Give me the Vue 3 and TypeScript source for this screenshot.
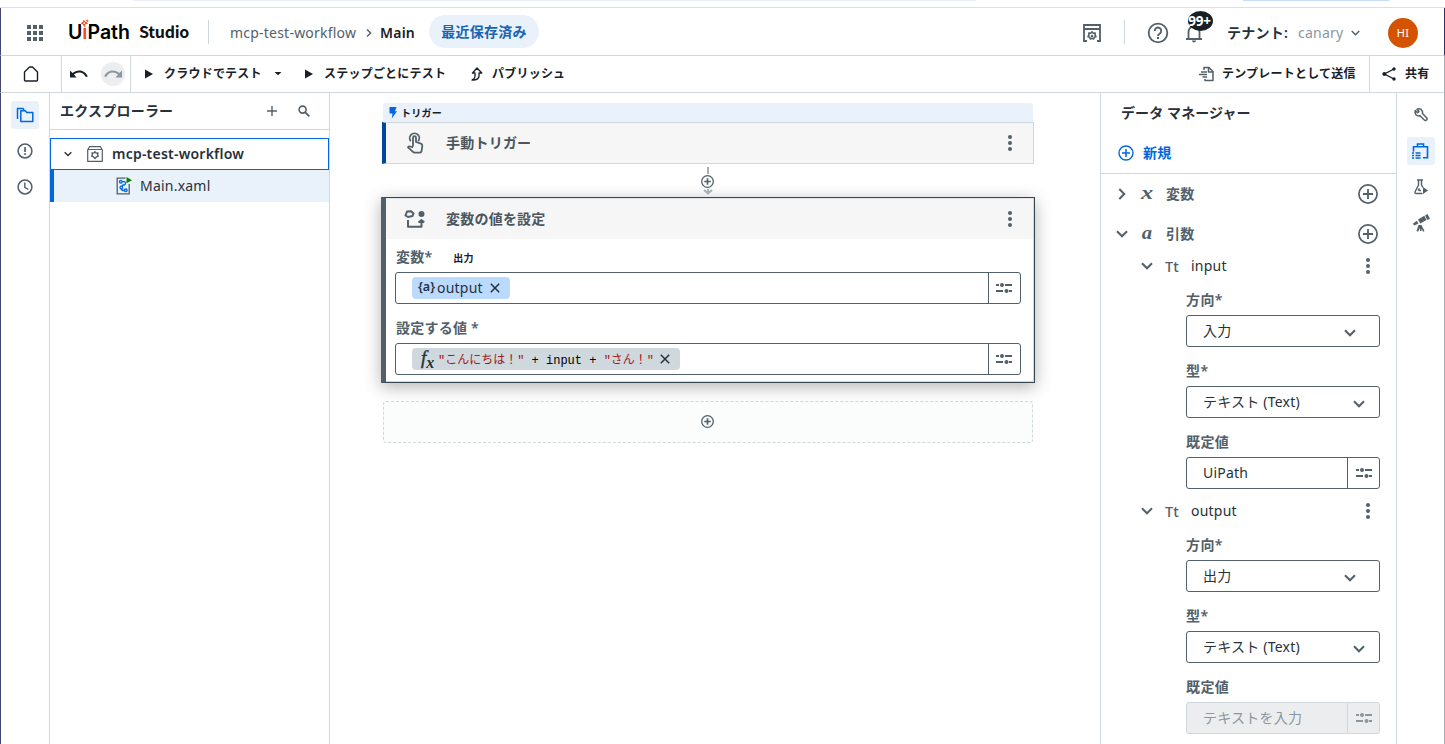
<script setup lang="ts">
import { h, type FunctionalComponent } from 'vue'

interface Glyph { w: number; h: number; body: string }

const line = 'fill="none" stroke="currentColor"'
const glyphs: Record<string, Glyph> = {
  apps: { w: 16, h: 16, body: '<path fill="currentColor" d="M0 0h4v4H0zM6 0h4v4H6zM12 0h4v4h-4zM0 6h4v4H0zM6 6h4v4H6zM12 6h4v4h-4zM0 12h4v4H0zM6 12h4v4H6zM12 12h4v4h-4z"/>' },
  spark: { w: 8, h: 7, body: '<path fill="none" stroke="#fa4616" stroke-width="1.100" d="M3 1.8 4.2 3.3 6 4.2 4.2 5 3 6.5 2.2 5 .6 4.2 2.2 3.3z"/><path fill="#fa4616" d="M6.2 0l.5 1.2L8 1.7l-1.3.5-.5 1.2-.5-1.2-1.2-.5 1.2-.5z"/>' },
  right: { w: 6, h: 10, body: `<path ${line} stroke-width="1.4" d="M1 1.5 4.6 5 1 8.5"/>` },
  store: { w: 18, h: 18, body: `<path ${line} stroke-width="1.8" d="M1 1h16v4H1zM4 17H1V5M14 17h3V5"/><path ${line} stroke-width="1.6" stroke-linejoin="round" d="m9 7.8 1.300 1.400 1.900-.1-.2 1.900 1 1.500-1.700.8-.7 1.700-1.600-.700-1.600.7-.7-1.700-1.700-.8 1-1.500-.2-1.900 1.900.1z"/><circle cx="9" cy="12" r="1.200" fill="currentColor"/>` },
  help: { w: 22, h: 22, body: `<circle cx="11" cy="11" r="9.3" ${line} stroke-width="1.8"/><path ${line} stroke-width="1.8" d="M7.800 9A3.200 3.200 0 1 1 12.800 11.400Q11 12.500 11 14"/><path fill="currentColor" d="M10 15h2v2h-2z"/>` },
  bell: { w: 18, h: 20, body: `<path ${line} stroke-width="1.8" d="M1 16h16M3.500 16V9.500C3.500 5.500 5.500 3.500 9 3.500s5.500 2 5.500 6V16"/><path fill="currentColor" d="M7 17.500h4a2 2 0 0 1-4 0z"/>` },
  down: { w: 12, h: 8, body: `<path ${line} stroke-width="2" d="M1 1.300 6 6.300l5-5"/>` },
  home: { w: 16, h: 16, body: `<path ${line} stroke-width="1.4" stroke-linejoin="round" d="M1.500 6 6.500 1h3l5 5V14q0 1-1 1h-11q-1 0-1-1z"/>` },
  undo: { w: 18, h: 9, body: '<path fill="currentColor" d="M0 .5 2.500 3C4.500 1.300 6.700.4 9.200.4c4 0 7.200 2.500 8.600 6l-2 .7C14.700 4.300 12.200 2.500 9.200 2.500c-2 0-3.800.8-5.200 2L6.500 7.500H0z"/>' },
  play: { w: 8, h: 10, body: '<path fill="currentColor" d="M0 .5 8 5 0 9.500z"/>' },
  caret: { w: 8, h: 4, body: '<path fill="currentColor" d="M.5 0h7L4 3.200z"/>' },
  publish: { w: 12, h: 14, body: `<path ${line} stroke-width="1.300" stroke-linejoin="round" d="M6 1 1.500 6H4v3.500Q3.700 12 1 13q6 .5 7-3.500V6h2.800z"/>` },
  folders: { w: 18, h: 16, body: `<path ${line} stroke-width="1.500" stroke-linejoin="round" d="M4.800 3.800h4.500l1.500 1.700h6V14.500h-12zM1.500 12V1.500H7l1.200 1.300"/>` },
  alert: { w: 16, h: 16, body: `<circle cx="8" cy="8" r="6.900" ${line} stroke-width="1.500"/><path fill="currentColor" d="M7.200 4h1.700v5H7.200zM7.200 10.300h1.700V12H7.200z"/>` },
  clock: { w: 16, h: 16, body: `<circle cx="8" cy="8" r="6.900" ${line} stroke-width="1.500"/><path ${line} stroke-width="1.400" d="M7.800 3.500V8.300l3.500 2.200"/>` },
  plus: { w: 10, h: 10, body: `<path ${line} stroke-width="1.400" d="M5 0v10M0 5h10"/>` },
  search: { w: 12, h: 12, body: `<circle cx="4.600" cy="4.600" r="3.500" ${line} stroke-width="1.600"/><path ${line} stroke-width="1.900" d="m7.300 7.300 4 4"/>` },
  project: { w: 16, h: 16, body: `<path ${line} stroke-width="1.200" stroke-linejoin="round" d="M1 3.500 2.500.7h11L15 3.500M.7 3.500h14.600v11.800H.7z"/><path ${line} stroke-width="1.400" stroke-linejoin="round" d="m8 5.800 1.200 1.300 1.800-.2-.5 2 .8 1.300-1.900.7L8 12.400l-1.400-1.500-1.900-.7.8-1.300-.5-2 1.800.2z"/>` },
  xaml: { w: 16, h: 18, body: `<path fill="none" stroke="#526069" stroke-width="1.300" d="M9.500 1.200H1.200v15.600h12V7"/><g fill="none" stroke="#0067df" stroke-width="1.300"><circle cx="4.800" cy="4.700" r="1.300"/><circle cx="5.300" cy="10.500" r="1.300"/><circle cx="9.800" cy="13.300" r="1.300"/><path d="M6 4.700h2.300q1.200 0 1.200 1.500T8.300 8H7L5.800 9.500M5.300 12q.3 1.500 3.200 1.500"/></g><path fill="#038108" d="M10.500 0 16 3.200l-5.500 3z"/>` },
  bolt: { w: 8, h: 12, body: '<path fill="#0067df" d="M.5 0h7L6 4.300h2L2.800 11.500 3.500 6.500H.5z"/>' },
  touch: { w: 18, h: 22, body: `<path ${line} stroke-width="1.800" stroke-linejoin="round" d="M7 14.500V5.700a1.500 1.500 0 0 1 3 0V10l5 1.700q1.500.5 1.300 2.300l-.7 5q-.3 1.700-2 1.700H8.700q-1 0-1.700-.8L2 15.300q.8-1.300 2.300-.8L7 15.500"/><path ${line} stroke-width="1.800" d="M4.800 9.200a4.800 4.800 0 1 1 7.400 0"/>` },
  assign: { w: 22, h: 18, body: `<path ${line} stroke-width="2" stroke-linejoin="round" d="M3 1.500 7 1.300 9.500 3.500 8.500 6 4 7 1.500 5.500zM4 10v6.700h13.500V11M14.500 12.500l3-2.500 2.700 2.500"/><circle cx="17.500" cy="4" r="3" fill="currentColor"/>` },
  kebab: { w: 4, h: 16, body: '<g fill="currentColor"><circle cx="2" cy="2" r="2"/><circle cx="2" cy="8" r="2"/><circle cx="2" cy="14" r="2"/></g>' },
  sliders: { w: 16, h: 10, body: `<path ${line} stroke-width="2" d="M0 2h3M9 2h7M0 8h7M13 8h3"/><g fill="currentColor"><circle cx="6" cy="2" r="2"/><circle cx="10.500" cy="8" r="2"/></g>` },
  cross: { w: 10, h: 10, body: `<path ${line} stroke-width="1.500" d="m.8.8 8.400 8.400M9.200.8.8 9.200"/>` },
  add: { w: 13, h: 13, body: `<circle cx="6.500" cy="6.500" r="5.800" ${line} stroke-width="1.300"/><path ${line} stroke-width="1.700" d="M6.500 3.200v6.600M3.200 6.500h6.600"/>` },
  addBlue: { w: 16, h: 16, body: `<circle cx="8" cy="8" r="7" ${line} stroke-width="1.400"/><path ${line} stroke-width="1.500" d="M8 4v8M4 8h8"/>` },
  addBig: { w: 20, h: 20, body: `<circle cx="10" cy="10" r="9.100" ${line} stroke-width="1.700"/><path ${line} stroke-width="1.800" d="M10 5v10M5 10h10"/>` },
  stem: { w: 2, h: 8, body: '<path fill="#a4b1b8" d="M0 0h2v7H0z"/>' },
  arrow: { w: 10, h: 6, body: '<path fill="none" stroke="#a4b1b8" stroke-width="2" d="m1 1 4 3.500L9 1M5 0v4"/>' },
  template: { w: 15, h: 16, body: `<path ${line} stroke-width="1.500" stroke-linejoin="round" d="M5 4V1.500h5l4 4v9H6V13M9.500 1.500V6H14M2 6h6M0 8.500h8M3.500 11H8"/>` },
  share: { w: 14, h: 14, body: `<path ${line} stroke-width="1.400" d="M12 2 2.500 7l9.500 5"/><g fill="currentColor"><circle cx="12" cy="2" r="1.700"/><circle cx="2.300" cy="7" r="2"/><circle cx="12" cy="12" r="1.700"/></g>` },
  wrench: { w: 14, h: 14, body: `<path ${line} stroke-width="1.500" stroke-linejoin="round" d="M1.300 2.600 3.600 4.800 5 3.500 3 1.200q4-1.200 5.300 1.800.5 1.300 0 2.300l4.500 4.700q.8 1-.2 2t-2 .2L6 7.800Q3.500 8.500 2 6.800.7 5 1.300 2.600z"/>` },
  dataCase: { w: 17, h: 16, body: `<path ${line} stroke-width="1.600" d="M1.500 8.500V3.800h14v11H11M5.500 3.500V1h6v2.500"/><path ${line} stroke-width="1.500" d="M0 10h2M3.500 10h5M0 12.500h2M3.500 12.500h5M0 15h2M3.500 15h5"/>` },
  flask: { w: 14, h: 16, body: `<path ${line} stroke-width="1.400" stroke-linejoin="round" d="M3 1h6M4.500 1v5L1 13q-.3 1.500 1 1.500h6.500M7.500 1v5l1.500 2.500M4 11.500 5.500 9.500"/><path fill="currentColor" d="m9 8 5 3.500L9 15z"/><circle cx="6" cy="11.500" r="1" fill="currentColor"/>` },
  scope: { w: 18, h: 18, body: '<g fill="currentColor"><path d="M13 1.500 15.500 0 18 4.700 15.300 6zM6 5.500l6.300-3.700 2.200 4.300L8.300 9.500zM1 9.500l4-2.800L6.300 9.800 2 11.500zM6.500 11h3l3 6-1.400.8L9.500 14.500V17H8v-3l-2 3.800L4.500 17z"/></g>' },
}

const Icon: FunctionalComponent<{ name: string }> = (props) => {
  const g = glyphs[props.name]
  return h('svg', { width: g.w, height: g.h, viewBox: `0 0 ${g.w} ${g.h}`, innerHTML: g.body, 'aria-hidden': 'true' })
}
Icon.props = ['name']

interface Argument { name: string; direction: string; value: string; disabled: boolean }
const args: Argument[] = [
  { name: 'input', direction: '入力', value: 'UiPath', disabled: false },
  { name: 'output', direction: '出力', value: 'テキストを入力', disabled: true },
]
</script>

<template>
  <div class="frame">
    <div class="strip"><span class="strip-a"></span><span class="strip-b"></span></div>

    <header class="header">
      <Icon name="apps" class="apps" />
      <div class="brand"><span>U<b>i</b>Path</span><Icon name="spark" class="spark" /></div>
      <span class="studio">Studio</span>
      <i class="vline head-line"></i>
      <span class="crumb">mcp-test-workflow</span>
      <Icon name="right" class="crumb-sep" />
      <span class="crumb-main">Main</span>
      <span class="pill">最近保存済み</span>
      <div class="head-right">
        <Icon name="store" />
        <i class="vline line-r"></i>
        <Icon name="help" class="help" />
        <div class="bell"><Icon name="bell" /><span class="badge">99+</span></div>
        <span class="tenant">テナント:</span>
        <span class="canary">canary</span>
        <Icon name="down" class="tenant-down" />
        <span class="avatar">HI</span>
      </div>
    </header>

    <div class="toolbar">
      <div class="tb-home"><Icon name="home" /></div>
      <div class="tb-undo"><Icon name="undo" /><span class="redo"><Icon name="undo" class="flip" /></span></div>
      <Icon name="play" class="play1" /><span class="t1">クラウドでテスト</span><Icon name="caret" class="caret" />
      <Icon name="play" class="play2" /><span class="t2">ステップごとにテスト</span>
      <Icon name="publish" class="pub" /><span class="t3">パブリッシュ</span>
      <div class="tb-right">
        <Icon name="template" class="tpl" /><span class="t4">テンプレートとして送信</span>
        <div class="share"><Icon name="share" /><span>共有</span></div>
      </div>
    </div>

    <div class="body">
      <nav class="rail left">
        <span class="rail-item on"><Icon name="folders" /></span>
        <span class="rail-item"><Icon name="alert" /></span>
        <span class="rail-item"><Icon name="clock" /></span>
      </nav>

      <aside class="explorer">
        <div class="ex-head"><span>エクスプローラー</span><Icon name="plus" class="ex-plus" /><Icon name="search" class="ex-search" /></div>
        <div class="row project"><Icon name="down" class="tree-down" /><Icon name="project" class="prj" /><span>mcp-test-workflow</span></div>
        <div class="row file"><Icon name="xaml" /><span>Main.xaml</span></div>
      </aside>

      <main class="canvas">
        <div class="trigger-tab"><Icon name="bolt" /><span>トリガー</span></div>
        <section class="trigger"><Icon name="touch" class="act-icon" /><span class="act-title">手動トリガー</span><Icon name="kebab" class="act-menu" /></section>
        <div class="link"><Icon name="stem" /><Icon name="add" class="add" /><Icon name="arrow" class="arrow" /></div>
        <section class="activity">
          <div class="act-head"><Icon name="assign" class="act-icon" /><span class="act-title">変数の値を設定</span><Icon name="kebab" class="act-menu" /></div>
          <div class="label first"><span>変数*</span><small>出力</small></div>
          <div class="field"><div class="slot"><span class="chip var"><b class="brace">{a}</b><span class="var-name">output</span><Icon name="cross" /></span></div><div class="opts"><Icon name="sliders" /></div></div>
          <div class="label second"><span>設定する値 *</span></div>
          <div class="field"><div class="slot"><span class="chip expr"><i class="fx">f<sub>x</sub></i><code><em>"こんにちは！"</em> + input + <em>"さん！"</em></code><Icon name="cross" /></span></div><div class="opts"><Icon name="sliders" /></div></div>
        </section>
        <div class="drop"><Icon name="add" class="add drop-add" /></div>
      </main>

      <aside class="data">
        <h2>データ マネージャー</h2>
        <div class="new"><Icon name="addBlue" /><span>新規</span></div>
        <div class="group"><span class="g-chev"><Icon name="down" class="turn" /></span><i class="g-sym">x</i><span class="g-name">変数</span><Icon name="addBig" class="g-add" /></div>
        <div class="group"><span class="g-chev"><Icon name="down" /></span><i class="g-sym sym-a">a</i><span class="g-name">引数</span><Icon name="addBig" class="g-add" /></div>
        <div v-for="a in args" :key="a.name" class="arg">
          <div class="arg-head"><Icon name="down" /><span class="tt">Tt</span><span class="arg-name">{{ a.name }}</span><Icon name="kebab" class="arg-menu" /></div>
          <div class="prop"><label>方向*</label><div class="select dir"><span>{{ a.direction }}</span><Icon name="down" /></div></div>
          <div class="prop"><label>型*</label><div class="select"><span>テキスト (Text)</span><Icon name="down" /></div></div>
          <div class="prop"><label>既定値</label><div class="value" :class="{ disabled: a.disabled }"><span>{{ a.value }}</span><div class="v-opts"><Icon name="sliders" /></div></div></div>
        </div>
      </aside>

      <nav class="rail right">
        <span class="rail-item"><Icon name="wrench" /></span>
        <span class="rail-item on"><Icon name="dataCase" /></span>
        <span class="rail-item"><Icon name="flask" /></span>
        <span class="rail-item"><Icon name="scope" /></span>
      </nav>
    </div>
  </div>
</template>

<style>
body { background: #fff; overflow: hidden; }
</style>

<style scoped>
.frame { box-sizing: border-box; width: 1445px; height: 744px; overflow: hidden; display: flex; flex-direction: column; background: #fff; color: #182027; font: 14px/20px "Noto Sans", "Noto Sans CJK JP", sans-serif; letter-spacing: .22px; }
.frame * { box-sizing: border-box; }
svg { display: block; flex: none; }
span, label, h2 { white-space: nowrap; }
.strip { height: 8px; flex: none; border-bottom: 1px solid #dcdfe3; display: flex; }
.strip-a { width: 843px; height: 1px; margin-left: 133px; background: #e9eef8; }
.strip-b { width: 146px; height: 1px; margin-left: 267px; background: #c9dbfb; }
.header { height: 48px; flex: none; display: flex; align-items: center; border-bottom: 1px solid #cfd8dd; border-left: 1px solid #444570; border-right: 1px solid #2d3468; padding-top: 2px; }
.apps { margin-left: 26px; color: #526069; }
.brand { position: relative; margin-left: 25px; width: 63px; font: 600 19.5px/24px Inter, sans-serif; letter-spacing: 0; color: #000; margin-top: -1px; }
.brand b { color: #fa4616; font-weight: 600; }
.spark { position: absolute; left: 13px; top: -1px; background: #fff; }
.studio { margin-left: 8px; width: 50px; font: 700 16px/24px "Noto Sans CJK JP", sans-serif; letter-spacing: -.25px; color: #111; margin-top: -3px; }
.vline { width: 1px; height: 24px; background: #cfd8dd; flex: none; margin-top: -2px; }
.head-line { margin-left: 19px; }
.crumb { margin-left: 21px; width: 126px; color: #526069; }
.crumb-sep { margin-left: 10px; color: #526069; }
.crumb-main { margin-left: 8px; width: 36px; font-weight: 600; color: #182027; }
.pill { margin-left: 13px; width: 110px; height: 33px; border-radius: 17px; background: #e9f1fa; color: #1665b3; text-align: center; line-height: 33px; font-weight: 700; margin-top: -2px; }
.head-right { margin-left: auto; display: flex; align-items: center; color: #526069; }
.line-r { margin-left: 23px; }
.help { margin-left: 22px; }
.bell { position: relative; margin-left: 16px; width: 18px; }
.badge { position: absolute; left: 3px; top: -12px; width: 25px; height: 20px; border-radius: 50%; background: #182027; color: #fff; font-size: 13.5px; line-height: 20px; font-weight: 700; text-align: center; letter-spacing: -.2px; text-indent: -2px; }
.tenant { margin-left: 24px; width: 62px; color: #273139; font-weight: 600; }
.canary { margin-left: 9px; width: 46px; color: #8a97a0; }
.tenant-down { margin-left: 7px; width: 9px; }
.avatar { margin: 0 26px 0 28px; width: 30px; height: 30px; border-radius: 50%; background: #d45300; color: #fff; font-size: 11px; line-height: 30px; text-align: center; }
.toolbar { height: 37px; flex: none; display: flex; align-items: center; border-bottom: 1px solid #cfd8dd; border-left: 1px solid #444570; border-right: 1px solid #a8acb2; font-size: 12px; font-weight: 700; }
.tb-home { width: 61px; height: 36px; border-right: 1px solid #cfd8dd; display: flex; align-items: center; padding-left: 22px; }
.tb-undo { width: 69px; height: 36px; border-right: 1px solid #cfd8dd; display: flex; align-items: center; padding-left: 8px; gap: 13px; }
.redo { width: 24px; height: 24px; border-radius: 50%; background: #ecedee; color: #8a97a0; display: flex; align-items: center; justify-content: center; }
.flip { transform: scaleX(-1); }
.play1 { margin-left: 14px; }
.t1 { margin-left: 11px; width: 99px; }
.caret { margin-left: 11px; }
.play2 { margin-left: 23px; }
.t2 { margin-left: 11px; width: 123px; }
.pub { margin-left: 24px; }
.t3 { margin-left: 9px; }
.tb-right { margin-left: auto; display: flex; align-items: center; height: 36px; }
.tpl { color: #526069; }
.t4 { margin-left: 8px; width: 135px; }
.share { height: 36px; width: 75px; margin-left: 12px; border-left: 1px solid #cfd8dd; padding-left: 12px; display: flex; align-items: center; gap: 9px; }
.body { flex: 1; min-height: 0; display: flex; border-left: 1px solid #444570; border-right: 1px solid #a8acb2; }
.rail { width: 49px; flex: none; display: flex; flex-direction: column; align-items: center; padding-top: 8px; gap: 8px; color: #526069; }
.left { border-right: 1px solid #cfd8dd; }
.right { width: 48px; border-left: 1px solid #cfd8dd; }
.rail-item { width: 28px; height: 28px; border-radius: 3px; display: flex; align-items: center; justify-content: center; }
.on { background: #e9f1fa; color: #0067df; }
.explorer { width: 280px; flex: none; border-right: 1px solid #cfd8dd; }
.ex-head { height: 37px; border-bottom: 1px solid #cfd8dd; display: flex; align-items: center; font-weight: 700; padding-left: 10px; color: #273139; margin-bottom: 8px; }
.ex-head span { width: 207px; }
.ex-plus, .ex-search { color: #526069; }
.ex-search { margin-left: 21px; }
.row { height: 32px; display: flex; align-items: center; color: #273139; }
.project { border: 1px solid #0067df; padding-left: 13px; font-weight: 600; }
.tree-down { width: 8px; }
.prj { margin: 0 9px 0 15px; color: #526069; }
.file { background: #e9f1fa; border-left: 4px solid #0067df; padding-left: 62px; gap: 8px; }
.canvas { width: 770px; flex: none; padding: 10px 66px 0 53px; }
.trigger-tab { height: 19px; border-radius: 3px 3px 0 0; background: #e9f1fa; display: flex; align-items: center; gap: 4px; padding-left: 6px; font-size: 10px; font-weight: 700; width: 650px; }
.trigger { height: 42px; width: 652px; margin-left: -1px; border: 1px solid #cfd8dd; border-left: 4px solid #00489d; background: #f6f6f6; display: flex; align-items: center; color: #526069; padding-left: 14px; }
.act-icon { width: 30px; }
.act-title { font-weight: 700; width: 562px; margin-left: 16px; color: #4a555e; }
.link { height: 33px; width: 650px; display: flex; flex-direction: column; align-items: center; padding-top: 3px; color: #526069; }
.add { margin-left: -1px; }
.arrow { margin-top: 1px; }
.activity { width: 654px; height: 186px; margin-left: -2px; border: 1px solid #374751; border-left: 5px solid #526069; box-shadow: inset -1px 0 0 #cfd8dd, inset 0 1px 0 #dfe5e8, inset 0 -1px 0 #cfd8dd, 0 4px 16px rgba(0,0,0,.3); background: #fff; }
.act-head { height: 40px; margin: 1px 1px 0 0; background: #f6f6f6; display: flex; align-items: center; color: #526069; padding-left: 14px; }
.label { display: flex; height: 20px; padding-left: 10px; color: #526069; font-weight: 600; }
.label small { font-size: 10px; margin-left: 21px; color: #182027; line-height: 22px; font-weight: 700; }
.first { margin: 8px 0 5px; }
.second { margin: 14px 0 5px; }
.field { width: 626px; height: 32px; margin-left: 9px; border: 1px solid #526069; border-radius: 3px; display: flex; }
.slot { width: 592px; padding: 4px 0 0 16px; }
.opts { flex: 1; border-left: 1px solid #526069; display: flex; align-items: center; padding-left: 7px; color: #526069; }
.chip { height: 22px; display: flex; align-items: center; border-radius: 4px; color: #273139; }
.var { width: 98px; background: #badaff; padding-left: 6px; }
.brace { font-size: 12.5px; font-weight: 600; width: 19px; letter-spacing: 0; margin-top: -2px; }
.var-name { width: 53px; }
.expr { width: 268px; background: #cfd8dd; padding-left: 9px; }
.fx { font: italic 400 19px/20px "Liberation Serif", serif; width: 17px; letter-spacing: 0; white-space: nowrap; margin-top: -3px; -webkit-text-stroke: .4px currentColor; }
.fx sub { font-size: 16px; font-weight: 700; vertical-align: -4px; line-height: 0; -webkit-text-stroke: 0; }
code { font: 12px/20px "Liberation Mono", "Noto Sans CJK JP", monospace; width: 222px; white-space: pre; color: #000; letter-spacing: 0; margin-top: 3px; }
code em { font-style: normal; color: #a31515; }
.drop { width: 650px; height: 42px; margin-top: 18px; border: 1px dashed #cfd8dd; border-radius: 3px; background: #fbfdfc; display: flex; align-items: center; justify-content: center; color: #526069; }
.drop-add { margin-top: -1px; }
.data { width: 296px; flex: none; border-left: 1px solid #cfd8dd; overflow: hidden; color: #526069; }
h2 { margin: 10px 0 0 20px; font-size: 14px; line-height: 20px; font-weight: 700; color: #273139; letter-spacing: .1px; }
.new { height: 51px; padding: 10px 0 0 17px; border-bottom: 1px solid #cfd8dd; display: flex; align-items: center; gap: 9px; color: #0067df; font-weight: 700; }
.group { height: 40px; display: flex; align-items: center; }
.g-chev { width: 12px; margin-left: 15px; }
.turn { transform: rotate(-90deg); }
.g-sym { font: italic 700 18px/20px "Liberation Serif", serif; width: 14px; margin-left: 12px; margin-top: -3px; display: flex; justify-content: center; letter-spacing: 0; transform: scaleX(1.35); }
.sym-a { transform: scaleX(1.15); }
.g-name { margin-left: 12px; width: 192px; font-weight: 700; }
.arg-head { height: 24px; display: flex; align-items: center; padding-left: 40px; }
.tt { margin-left: 12px; width: 14px; font-size: 14.5px; font-weight: 500; letter-spacing: 0; margin-top: -1px; }
.arg-name { margin-left: 12px; width: 175px; color: #273139; }
.arg { height: 245px; }
.prop { margin: 0 0 8px 85px; width: 194px; height: 63px; padding-top: 6px; }
.arg-head + .prop { margin-top: 6px; }
label { display: block; height: 25px; line-height: 20px; font-weight: 600; letter-spacing: .4px; }
.select { height: 32px; border: 1px solid #526069; border-radius: 3px; display: flex; align-items: center; justify-content: space-between; padding: 0 14px 0 16px; color: #273139; }
.select svg { color: #526069; margin-top: 3px; }
.dir { padding-right: 23px; }
.value { height: 32px; border: 1px solid #526069; border-radius: 3px; display: flex; align-items: center; padding-left: 16px; color: #273139; }
.v-opts { width: 32px; height: 30px; margin-left: auto; border-left: 1px solid #526069; display: flex; align-items: center; justify-content: center; color: #526069; }
.disabled, .disabled .v-opts { border-color: #cfd8dd; color: #8a97a0; }
.disabled { background: #ecedee; }
</style>
